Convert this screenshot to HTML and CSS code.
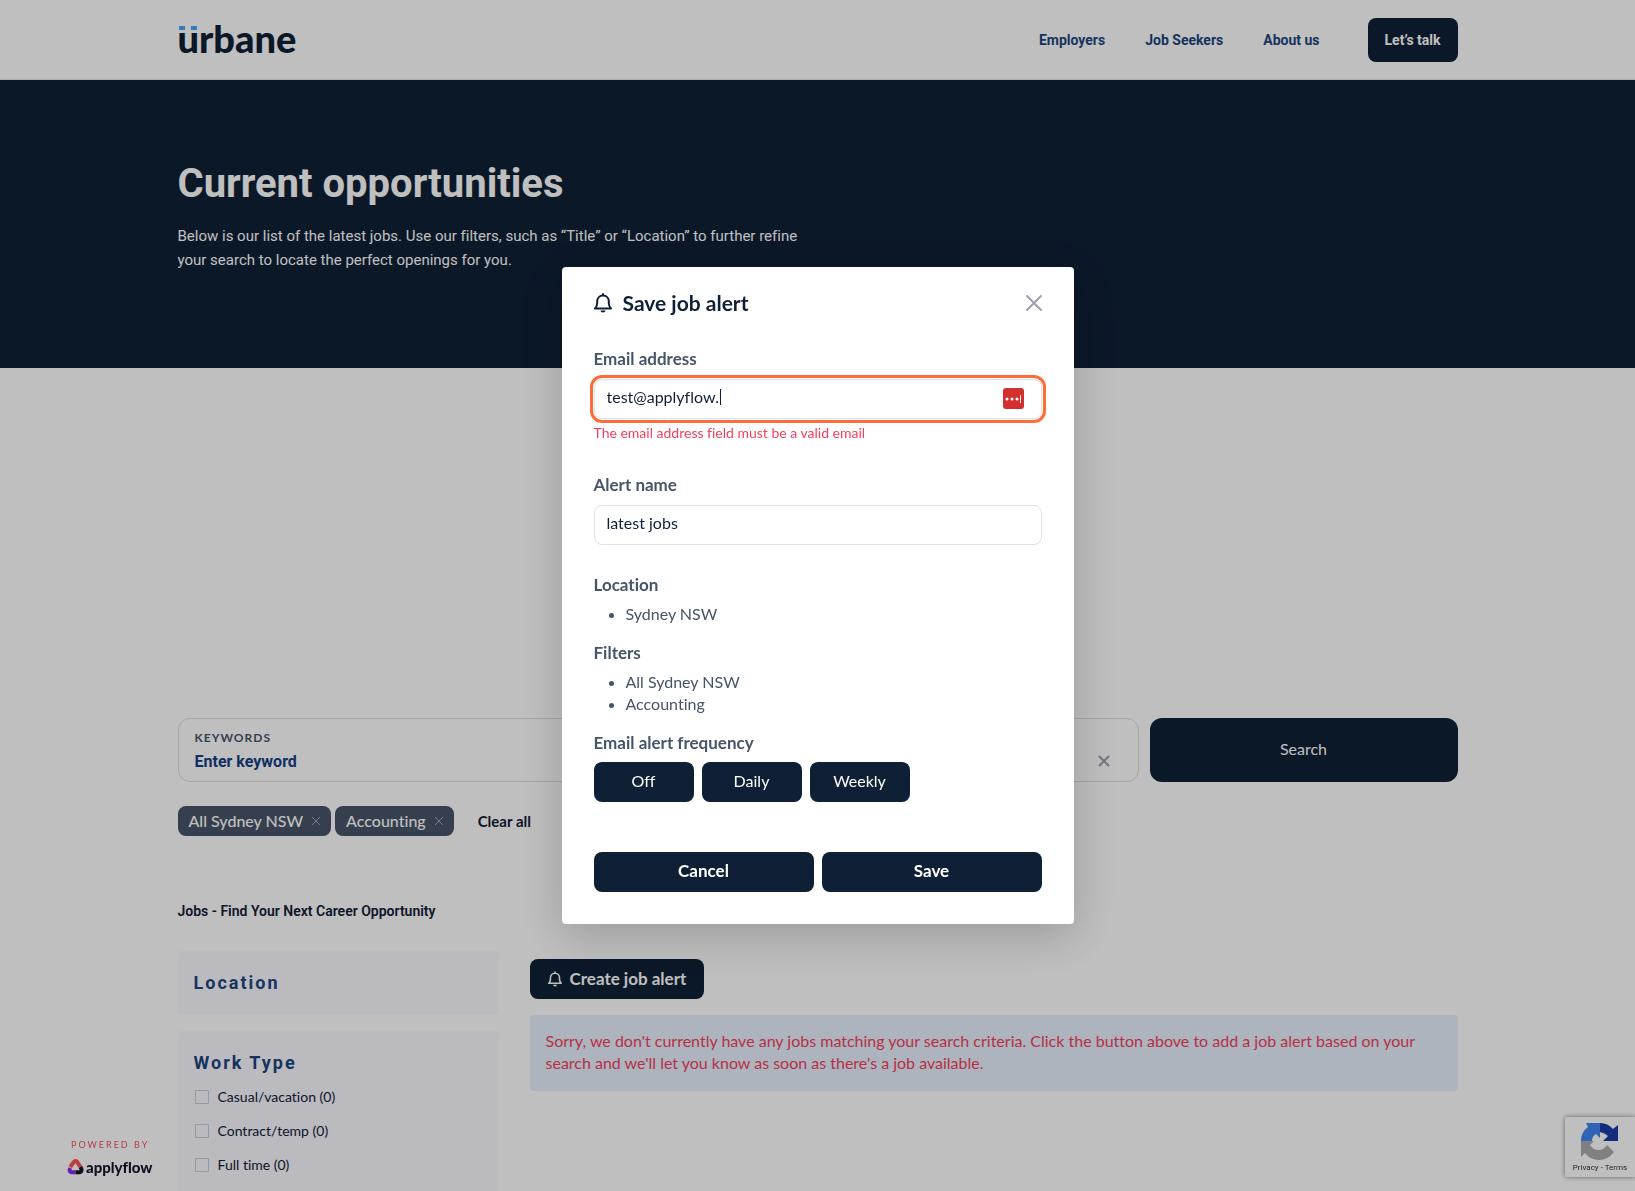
FILE: index.html
```html
<!DOCTYPE html>
<html lang="en">
<head>
	<meta charset="utf-8">
	<meta name="viewport" content="width=device-width, initial-scale=1">
	<title>Current opportunities - Urbane</title>
	<link rel="stylesheet" href="styles.css">
</head>
<body>
	<header class="site-header">
		<div class="container header-inner">
			<a href="#" class="logo">urbane</a>
			<nav class="nav">
				<a href="#">Employers</a>
				<a href="#">Job Seekers</a>
				<a href="#">About us</a>
				<a href="#" class="btn-talk">Let’s talk</a>
			</nav>
		</div>
	</header>

	<section class="hero">
		<div class="container">
			<h1>Current opportunities</h1>
			<p>Below is our list of the latest jobs. Use our filters, such as “Title” or “Location” to further refine your search to locate the perfect openings for you.</p>
		</div>
	</section>

	<main class="container main">
		<form class="search" onsubmit="return false">
			<div class="search-box">
				<div class="search-field">
					<label for="keywords">Keywords</label>
					<input type="text" id="keywords" placeholder="Enter keyword">
				</div>
				<button type="button" class="clear" aria-label="Clear">
					<svg width="12" height="12" viewBox="0 0 12 12"><path d="M1 1l10 10M11 1L1 11"/></svg>
				</button>
			</div>
			<button type="submit" class="btn-search">Search</button>
		</form>

		<div class="tags">
			<button type="button" class="tag">All Sydney NSW <svg width="8" height="8" viewBox="0 0 8 8"><path d="M0 0l8 8M8 0L0 8"/></svg></button>
			<button type="button" class="tag">Accounting <svg width="8" height="8" viewBox="0 0 8 8"><path d="M0 0l8 8M8 0L0 8"/></svg></button>
			<a href="#" class="clear-all">Clear all</a>
		</div>

		<h2 class="jobs-title">Jobs - Find Your Next Career Opportunity</h2>

		<div class="columns">
			<aside class="sidebar">
				<div class="card">
					<h3>Location</h3>
				</div>
				<div class="card">
					<h3>Work Type</h3>
					<label class="check"><input type="checkbox"> Casual/vacation (0)</label>
					<label class="check"><input type="checkbox"> Contract/temp (0)</label>
					<label class="check"><input type="checkbox"> Full time (0)</label>
				</div>
			</aside>
			<div class="results">
				<button type="button" class="btn-alert">
					<svg class="bell" width="14" height="16" viewBox="0 0 18 20"><path d="M9 1v1.500M1 15.500h16c-1.600-1.500-2.200-3-2.200-5.500V8.300C14.800 5 12.300 2.500 9 2.500S3.200 5 3.200 8.300V10c0 2.500-.6 4-2.200 5.500z"/><path class="clapper" d="M6.500 17.500h5a2.500 2 0 0 1-5 0z"/></svg>
					Create job alert
				</button>
				<p class="no-jobs">Sorry, we don't currently have any jobs matching your search criteria. Click the button above to add a job alert based on your search and we'll let you know as soon as there's a job available.</p>
			</div>
		</div>
	</main>

	<a href="#" class="powered">
		<span class="powered-by">Powered by</span>
		<span class="powered-logo">
			<svg width="17" height="16" viewBox="0 0 17 16">
				<path d="M3.200 8L7 2.800q1.500-1.700 3 0L13.500 8" stroke="#ff5050"/>
				<path d="M8.500 13.200H4.500Q1.500 12.800 3.200 9" stroke="#8c2ae8"/>
				<path d="M13.500 8q2.500 4.600-.7 5.200H8.500" stroke="#14142b"/>
			</svg>
			applyflow
		</span>
	</a>

	<div class="recaptcha">
		<svg width="38" height="38" viewBox="0 0 38 38">
			<path d="M5 1h14v15l-4-4q-4 2-4 7H0q0-9 7-14z" fill="#4285f4"/>
			<path d="M19 1q8 0 13 6l5-4v16H22l5-5q-3-3-8-4z" fill="#1c3aa9"/>
			<path d="M0 19h13l-4 4q3 5 9 5 5 0 8-5l7 7q-6 8-15 8-9 0-14-7l-4 4z" fill="#ababab"/>
		</svg>
		<span><a href="#">Privacy</a> - <a href="#">Terms</a></span>
	</div>

	<div class="overlay">
		<form class="modal" role="dialog" aria-labelledby="modal-title" onsubmit="return false">
			<div class="modal-header">
				<svg class="bell" width="18" height="20" viewBox="0 0 18 20"><path d="M9 1v1.500M1 15.500h16c-1.600-1.500-2.200-3-2.200-5.500V8.300C14.800 5 12.300 2.500 9 2.500S3.200 5 3.200 8.300V10c0 2.500-.6 4-2.200 5.500z"/><path class="clapper" d="M6.500 17.500h5a2.500 2 0 0 1-5 0z"/></svg>
				<h2 id="modal-title">Save job alert</h2>
				<button type="button" class="close" aria-label="Close">
					<svg width="16" height="16" viewBox="0 0 16 16"><path d="M1 1l14 14M15 1L1 15"/></svg>
				</button>
			</div>

			<div class="field">
				<label for="email">Email address</label>
				<div class="input-wrap">
					<input type="text" id="email" class="invalid" value="test@applyflow.">
					<span class="caret"></span>
					<svg class="vault" width="21" height="21" viewBox="0 0 21 21">
						<rect width="21" height="21" rx="3" fill="#d32f2f"/>
						<g fill="#fff"><circle cx="4" cy="11" r="1.500"/><circle cx="9" cy="11" r="1.500"/><circle cx="14" cy="11" r="1.500"/><rect x="17" y="7" width="1" height="8"/></g>
					</svg>
				</div>
				<p class="error">The email address field must be a valid email</p>
			</div>

			<div class="field">
				<label for="alert-name">Alert name</label>
				<input type="text" id="alert-name" value="latest jobs">
			</div>

			<div class="summary">
				<h3>Location</h3>
				<ul>
					<li>Sydney NSW</li>
				</ul>
				<h3>Filters</h3>
				<ul>
					<li>All Sydney NSW</li>
					<li>Accounting</li>
				</ul>
				<h3>Email alert frequency</h3>
				<div class="frequency">
					<button type="button">Off</button>
					<button type="button">Daily</button>
					<button type="button">Weekly</button>
				</div>
			</div>

			<div class="actions">
				<button type="button">Cancel</button>
				<button type="submit">Save</button>
			</div>
		</form>
	</div>
</body>
</html>
```
FILE: styles.css
```css
* {
	box-sizing: border-box;
}

body {
	margin: 0;
	height: 100vh;
	overflow: hidden;
	background: #fff;
	color: #0f2036;
	font-family: Lato, "Liberation Sans", sans-serif;
	font-size: 16px;
	line-height: 22px;
	font-variant-ligatures: none;
}

h1, h2, h3, p, ul {
	margin: 0;
}

a {
	color: inherit;
	text-decoration: none;
}

button, input {
	font: inherit;
	font-variant-ligatures: none;
}

button {
	border: none;
	border-radius: 8px;
	padding: 0 0 2px;
	background: #0f2036;
	color: #fff;
	cursor: pointer;
}

svg {
	flex: none;
	fill: none;
}

.container {
	width: 100%;
	max-width: 1280px;
	margin: 0 auto;
}

/* header */
.site-header {
	border-bottom: 1px solid #e5e5e5;
}

.header-inner {
	display: flex;
	align-items: center;
	justify-content: space-between;
	height: 79px;
}

.logo {
	position: relative;
	padding-bottom: 4px;
	font-size: 38px;
	font-weight: 900;
	line-height: 40px;
}

/* the two dots over the u */
.logo::before {
	content: "";
	position: absolute;
	top: 8px;
	left: 1px;
	width: 18px;
	height: 4px;
	background: linear-gradient(to right, #4da3ff 6px, transparent 6px, transparent 12px, #4da3ff 12px);
}

.nav {
	display: flex;
	align-items: center;
	gap: 40px;
	font-family: Roboto, sans-serif;
	font-size: 14px;
	font-weight: 700;
	color: #1d457f;
}

.nav .btn-talk {
	margin-left: 8px;
	padding: 11px 17px;
	border-radius: 8px;
	background: #0f2036;
	color: #fff;
}

/* hero */
.hero {
	padding: 80px 0 96px;
	background: #0f2036;
	color: #fff;
	font-family: Roboto, sans-serif;
}

.hero h1 {
	margin-bottom: 16px;
	font-size: 40px;
	line-height: 48px;
}

.hero p {
	max-width: 640px;
	font-size: 15px;
	line-height: 24px;
}

/* search */
.main {
	padding-top: 350px;
}

.search {
	display: flex;
	gap: 11px;
}

.search-box {
	flex: 1;
	display: flex;
	align-items: flex-end;
	justify-content: space-between;
	height: 64px;
	padding: 8px 28px 8px 16px;
	border: 1px solid #dfdfdf;
	border-radius: 12px;
}

.search-field {
	display: flex;
	flex-direction: column;
}

.search-field label {
	font-size: 12px;
	font-weight: 700;
	letter-spacing: 1px;
	text-transform: uppercase;
	color: #475569;
}

.search-field input {
	height: 24px;
	padding: 0;
	border: none;
	background: none;
	font-family: Roboto, sans-serif;
	font-weight: 700;
}

.search-field input::placeholder {
	color: #143f83;
	opacity: 1;
}

.clear {
	display: flex;
	margin-bottom: 4px;
	background: none;
}

.clear svg {
	stroke: #9a9ab0;
	stroke-width: 2;
}

.btn-search {
	width: 308px;
	border-radius: 12px;
}

/* tags */
.tags {
	display: flex;
	align-items: center;
	gap: 4px;
	margin-top: 24px;
}

.tag {
	display: flex;
	align-items: center;
	gap: 9px;
	height: 30px;
	padding: 0 11px;
	background: #475569;
	font-weight: 500;
}

.tag svg {
	stroke: #a0a4b4;
	stroke-width: 1;
}

.clear-all {
	margin-left: 20px;
	font-size: 15px;
	font-weight: 700;
}

.jobs-title {
	margin: 64px 0 29px;
	font-family: Roboto, sans-serif;
	font-size: 14px;
	font-weight: 600;
}

/* columns */
.columns {
	display: flex;
	gap: 32px;
}

.sidebar {
	width: 320px;
	display: flex;
	flex-direction: column;
	gap: 16px;
}

.card {
	padding: 20px 16px;
	border-radius: 4px;
	background: #faf8ff;
}

.card h3 {
	font-family: Roboto, sans-serif;
	font-size: 18px;
	line-height: 24px;
	letter-spacing: 2px;
	color: #1d457f;
}

.check {
	display: flex;
	align-items: center;
	gap: 9px;
	height: 22px;
	margin: 11px 1px 12px;
	font-size: 14px;
}

.check input {
	appearance: none;
	width: 14px;
	height: 14px;
	margin: 0;
	border: 1px solid #c8ccd4;
	border-radius: 1px;
}

.results {
	flex: 1;
	padding-top: 8px;
}

.btn-alert {
	display: flex;
	align-items: center;
	gap: 8px;
	height: 40px;
	padding: 0 18px;
	font-size: 17px;
	font-weight: 700;
}

.bell {
	stroke: currentColor;
	stroke-width: 2;
	stroke-linejoin: round;
	stroke-linecap: round;
}

.bell .clapper {
	fill: currentColor;
	stroke: none;
}

.no-jobs {
	margin-top: 16px;
	padding: 15px 16px 17px;
	border-radius: 4px;
	background: #e8f0fc;
	color: #f43f5e;
}

/* corner badges */
.powered {
	position: fixed;
	left: 67px;
	bottom: 15px;
	display: flex;
	flex-direction: column;
	gap: 7px;
}

.powered-by {
	padding-left: 4px;
	font-size: 9px;
	line-height: 12px;
	letter-spacing: 2px;
	text-transform: uppercase;
	color: #f4525c;
}

.powered-logo {
	display: flex;
	align-items: center;
	gap: 2px;
	font-size: 15px;
	font-weight: 900;
	line-height: 18px;
	color: #14142b;
}

.powered-logo svg {
	stroke-width: 4;
}

.recaptcha {
	position: fixed;
	right: 0;
	bottom: 14px;
	width: 70px;
	height: 60px;
	padding-top: 5px;
	display: flex;
	flex-direction: column;
	align-items: center;
	border-radius: 2px 0 0 2px;
	background: #fff;
	box-shadow: 0 0 5px gray;
	color: #333;
	font-family: Roboto, sans-serif;
	font-size: 8px;
	line-height: 16px;
}

/* modal */
.overlay {
	position: fixed;
	inset: 0;
	display: flex;
	align-items: center;
	justify-content: center;
	background: rgba(0, 0, 0, 0.25);
}

.modal {
	width: 512px;
	max-width: 100%;
	padding: 24px 32px 32px;
	border-radius: 4px;
	background: #fff;
	box-shadow: 0 12px 48px rgba(0, 0, 0, 0.2);
}

.modal-header {
	display: flex;
	align-items: center;
	gap: 11px;
	margin-bottom: 32px;
}

.modal-header h2 {
	flex: 1;
	font-size: 21px;
	line-height: 24px;
}

.close {
	display: flex;
	padding: 0;
	background: none;
}

.close svg {
	stroke: #9f9fb5;
	stroke-width: 2;
	stroke-linecap: round;
}

.field {
	margin-bottom: 28px;
}

.field label,
.summary h3 {
	display: block;
	font-size: 17px;
	font-weight: 700;
	line-height: 24px;
	color: #475569;
}

.field label {
	margin-bottom: 8px;
}

.field input {
	display: block;
	width: 100%;
	height: 40px;
	padding: 0 12px 6px;
	border: 1px solid #e2e2e2;
	border-radius: 8px;
	background: #fff;
	color: #0f2036;
}

.field .invalid {
	outline: 3px solid #ff6c3a;
	outline-offset: 1px;
}

.input-wrap {
	position: relative;
}

.caret {
	position: absolute;
	top: 10px;
	left: 126px;
	width: 1px;
	height: 16px;
	background: #0f2036;
}

.vault {
	position: absolute;
	top: 9px;
	right: 18px;
}

.error {
	margin-top: 4px;
	margin-bottom: 30px;
	font-size: 14px;
	line-height: 20px;
	color: #f43f5e;
}

.summary {
	color: #475569;
}

.summary ul {
	margin: 6px 0 16px;
	padding-left: 32px;
}

.frequency {
	display: flex;
	gap: 8px;
	margin-top: 7px;
}

.frequency button {
	width: 100px;
	height: 40px;
}

.actions {
	display: flex;
	gap: 8px;
	margin-top: 50px;
}

.actions button {
	flex: 1;
	height: 40px;
	font-size: 17px;
	font-weight: 700;
}
```
